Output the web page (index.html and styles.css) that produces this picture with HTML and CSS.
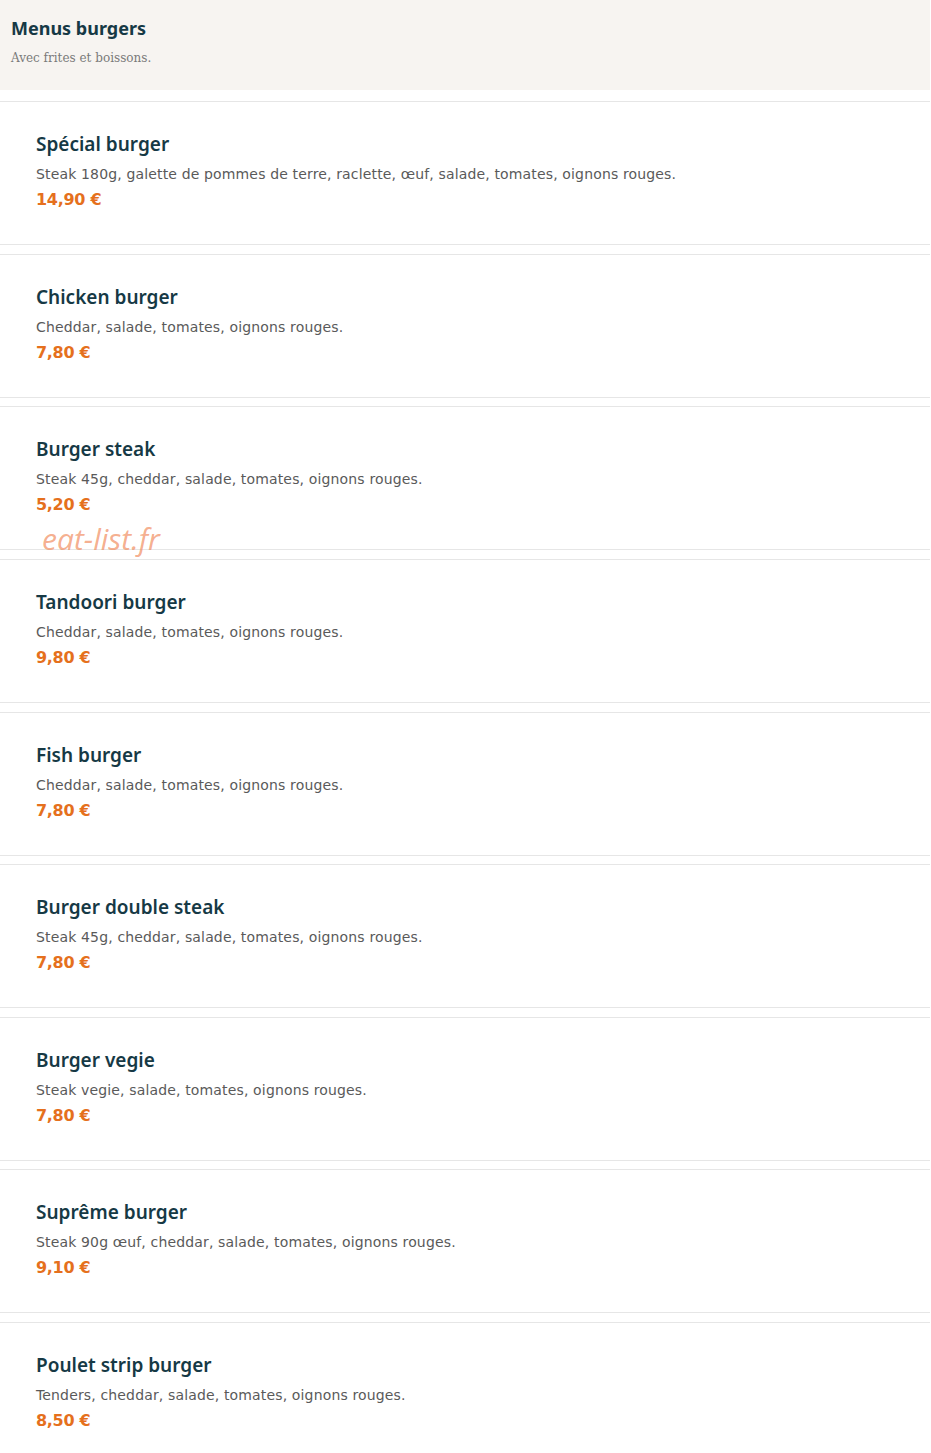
FILE: index.html
```html
<!DOCTYPE html>
<html lang="fr">
<head>
<meta charset="utf-8">
<title>Menus burgers</title>
<link rel="stylesheet" href="styles.css">
</head>
<body>
<div class="page">
  <header class="section-head">
    <h2 class="section-title">Menus burgers</h2>
    <p class="section-sub">Avec frites et boissons.</p>
  </header>
  <ul class="items">
    <li class="item">
      <h3 class="item-name">Spécial burger</h3>
      <p class="item-desc">Steak 180g, galette de pommes de terre, raclette, œuf, salade, tomates, oignons rouges.</p>
      <p class="item-price">14,90 €</p>
    </li>
    <li class="item">
      <h3 class="item-name">Chicken burger</h3>
      <p class="item-desc">Cheddar, salade, tomates, oignons rouges.</p>
      <p class="item-price">7,80 €</p>
    </li>
    <li class="item">
      <h3 class="item-name">Burger steak</h3>
      <p class="item-desc">Steak 45g, cheddar, salade, tomates, oignons rouges.</p>
      <p class="item-price">5,20 €</p>
      <span class="watermark">eat-list.fr</span>
    </li>
    <li class="item">
      <h3 class="item-name">Tandoori burger</h3>
      <p class="item-desc">Cheddar, salade, tomates, oignons rouges.</p>
      <p class="item-price">9,80 €</p>
    </li>
    <li class="item">
      <h3 class="item-name">Fish burger</h3>
      <p class="item-desc">Cheddar, salade, tomates, oignons rouges.</p>
      <p class="item-price">7,80 €</p>
    </li>
    <li class="item">
      <h3 class="item-name">Burger double steak</h3>
      <p class="item-desc">Steak 45g, cheddar, salade, tomates, oignons rouges.</p>
      <p class="item-price">7,80 €</p>
    </li>
    <li class="item">
      <h3 class="item-name">Burger vegie</h3>
      <p class="item-desc">Steak vegie, salade, tomates, oignons rouges.</p>
      <p class="item-price">7,80 €</p>
    </li>
    <li class="item">
      <h3 class="item-name">Suprême burger</h3>
      <p class="item-desc">Steak 90g œuf, cheddar, salade, tomates, oignons rouges.</p>
      <p class="item-price">9,10 €</p>
    </li>
    <li class="item">
      <h3 class="item-name">Poulet strip burger</h3>
      <p class="item-desc">Tenders, cheddar, salade, tomates, oignons rouges.</p>
      <p class="item-price">8,50 €</p>
    </li>
  </ul>
</div>
</body>
</html>
```

FILE: styles.css
```css
html, body {
  margin: 0;
  padding: 0;
  background: #ffffff;
}
body {
  font-family: "Noto Sans", "DejaVu Sans", sans-serif;
  color: #163945;
}
.page {
  width: 930px;
}
.section-head {
  background: #f7f4f1;
  height: 90px;
  box-sizing: border-box;
  padding: 17px 11px 0;
}
.section-title {
  margin: 0;
  font-size: 18px;
  line-height: 22px;
  font-weight: 700;
  color: #163945;
}
.section-sub {
  margin: 11px 0 0;
  font-family: "DejaVu Serif", serif;
  font-weight: 400;
  font-size: 12px;
  line-height: 16px;
  color: #7a7a7a;
}
.items {
  list-style: none;
  margin: 11px 0 0;
  padding: 0;
}
.item {
  position: relative;
  border-top: 1px solid #e6e6e6;
  border-bottom: 1px solid #e6e6e6;
  padding: 30px 36px 33px;
  margin-bottom: 8.625px;
}
.item-name {
  margin: 0;
  font-size: 19px;
  line-height: 24px;
  font-weight: 600;
  color: #163945;
}
.item-desc {
  margin: 8px 0 0;
  font-family: "DejaVu Sans", sans-serif;
  font-size: 14px;
  line-height: 20px;
  letter-spacing: 0.15px;
  color: #5a5a5a;
}
.item-price {
  margin: 5px 0 0;
  font-family: "DejaVu Sans", sans-serif;
  font-size: 16px;
  line-height: 22px;
  font-weight: 700;
  letter-spacing: -0.3px;
  color: #e5701d;
}
.watermark {
  position: absolute;
  left: 42px;
  top: 113px;
  font-family: "Open Sans", sans-serif;
  font-style: italic;
  font-size: 30px;
  line-height: 38px;
  color: rgba(240, 130, 80, 0.65);
}
```
